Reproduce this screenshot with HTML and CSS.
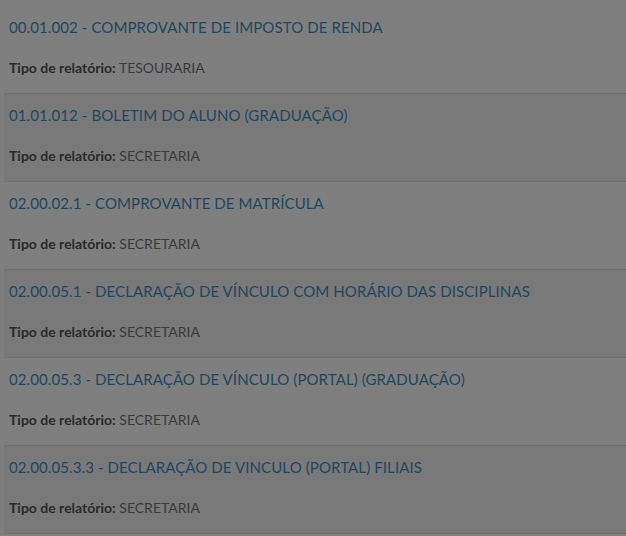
FILE: index.html
```html
<!DOCTYPE html>
<html lang="pt-BR">
<head>
<meta charset="utf-8">
<title>Relatórios</title>
<link rel="stylesheet" href="styles.css">
</head>
<body>
<ul class="report-list">
  <li class="report">
    <a class="report-title" href="#">00.01.002 - COMPROVANTE DE IMPOSTO DE RENDA</a>
    <p class="report-meta"><strong>Tipo de relatório:</strong> TESOURARIA</p>
  </li>
  <li class="report">
    <a class="report-title" href="#">01.01.012 - BOLETIM DO ALUNO (GRADUAÇÃO)</a>
    <p class="report-meta"><strong>Tipo de relatório:</strong> SECRETARIA</p>
  </li>
  <li class="report">
    <a class="report-title" href="#">02.00.02.1 - COMPROVANTE DE MATRÍCULA</a>
    <p class="report-meta"><strong>Tipo de relatório:</strong> SECRETARIA</p>
  </li>
  <li class="report">
    <a class="report-title" href="#">02.00.05.1 - DECLARAÇÃO DE VÍNCULO COM HORÁRIO DAS DISCIPLINAS</a>
    <p class="report-meta"><strong>Tipo de relatório:</strong> SECRETARIA</p>
  </li>
  <li class="report">
    <a class="report-title" href="#">02.00.05.3 - DECLARAÇÃO DE VÍNCULO (PORTAL) (GRADUAÇÃO)</a>
    <p class="report-meta"><strong>Tipo de relatório:</strong> SECRETARIA</p>
  </li>
  <li class="report">
    <a class="report-title" href="#">02.00.05.3.3 - DECLARAÇÃO DE VINCULO (PORTAL) FILIAIS</a>
    <p class="report-meta"><strong>Tipo de relatório:</strong> SECRETARIA</p>
  </li>
</ul>
<div class="backdrop"></div>
</body>
</html>
```

FILE: styles.css
```css
html, body {
  margin: 0;
  padding: 0;
  background: #ffffff;
  font-family: "Lato", "Open Sans", sans-serif;
  overflow: hidden;
}

.report-list {
  list-style: none;
  margin: 0;
  padding: 6px 0 0 4px;
}

.report {
  display: flex;
  flex-direction: column;
  height: 87px;
  box-sizing: content-box;
  border-bottom: 1px solid #dedede;
  padding: 0 0 0 5px;
  background: #ffffff;
}

.report:nth-child(even) {
  background: #f3f3f3;
}

.report-title {
  display: block;
  margin-top: 10px;
  font-size: 15px;
  letter-spacing: 0.1px;
  line-height: 22px;
  color: #3a92c2;
  text-decoration: none;
}

.report-meta {
  margin: 20px 0 0;
  font-size: 14px;
  line-height: 20px;
  color: #777777;
}

.report-meta strong {
  color: #555555;
  font-weight: 700;
}

.backdrop {
  position: fixed;
  inset: 0;
  background: rgba(0, 0, 0, 0.5);
}
```
